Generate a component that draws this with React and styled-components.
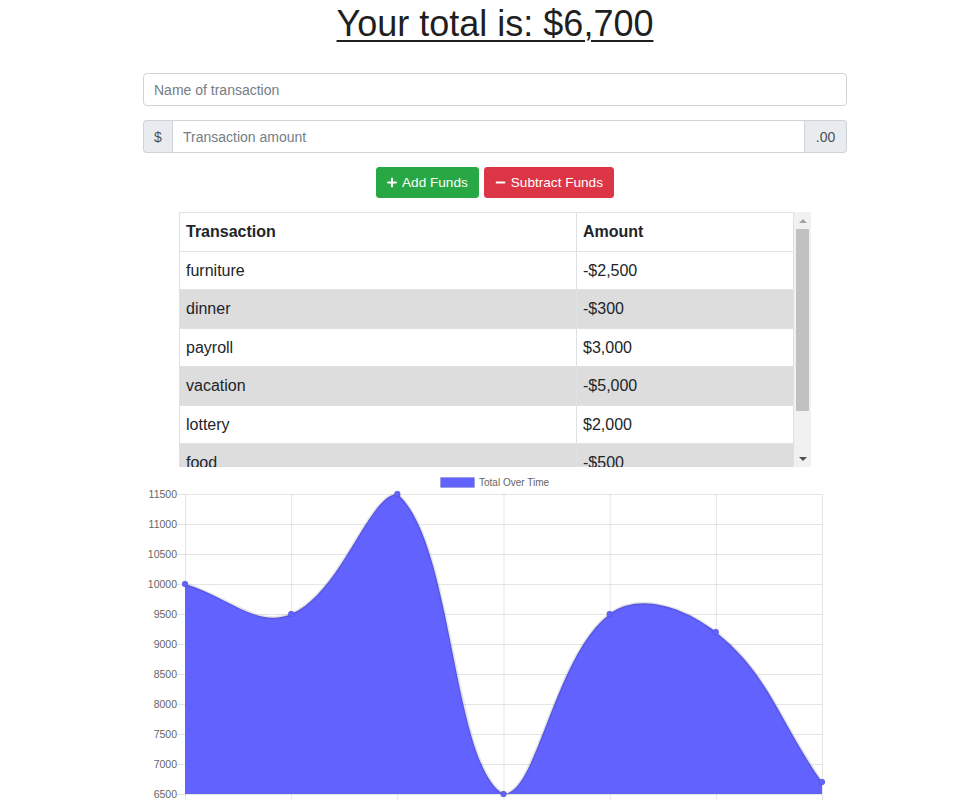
import React from 'react';
import styled, { createGlobalStyle } from 'styled-components';
import { FaPlus, FaMinus } from 'react-icons/fa';

const GlobalStyle = createGlobalStyle`
  html, body {
    margin: 0;
    padding: 0;
    overflow: hidden;
    background: #fff;
  }
  body {
    font-family: 'Liberation Sans', Arial, sans-serif;
    color: #212529;
  }
  * { box-sizing: border-box; }
`;

// Root shifts the centre line slightly right, like the original page
const Root = styled.div`
  padding-left: 15px;
`;

const Page = styled.div`
  width: 704px;
  margin: 0 auto;
  display: flex;
  flex-direction: column;
  align-items: center;
`;

const Title = styled.h1`
  margin: 0 0 28px;
  padding-top: 2px;
  font-size: 36px;
  line-height: 43px;
  font-weight: 400;
  color: #1f1f1f;
  text-decoration: underline;
  text-decoration-thickness: 2px;
  text-underline-offset: 4px;
`;

const Form = styled.div`
  width: 100%;
  display: flex;
  flex-direction: column;
  gap: 14px;
`;

const Input = styled.input`
  display: block;
  width: 100%;
  height: 33px;
  padding: 5px 10px;
  font-family: inherit;
  font-size: 14px;
  color: #495057;
  border: 1px solid #ced4da;
  border-radius: ${(p) => (p.$grouped ? '0' : '4px')};
  outline: none;
  flex: ${(p) => (p.$grouped ? '1 1 auto' : 'none')};
  min-width: 0;

  &::placeholder {
    color: #757d85;
  }
`;

const InputGroup = styled.div`
  display: flex;
  width: 100%;
  height: 33px;
`;

const Addon = styled.span`
  display: flex;
  align-items: center;
  justify-content: center;
  width: ${(p) => p.$width}px;
  flex: none;
  background: #e9ecef;
  border: 1px solid #ced4da;
  color: #495057;
  font-size: 14px;
  border-radius: ${(p) => (p.$side === 'left' ? '4px 0 0 4px' : '0 4px 4px 0')};
  ${(p) => (p.$side === 'left' ? 'border-right: none;' : 'border-left: none;')}
`;

const ButtonRow = styled.div`
  display: flex;
  gap: 5px;
  margin: 14px 0;
`;

const Button = styled.button`
  display: flex;
  align-items: center;
  gap: 5px;
  height: 31px;
  padding: 0 10px;
  font-family: inherit;
  font-size: 13.6px;
  color: #fff;
  border: 1px solid ${(p) => (p.$variant === 'danger' ? '#dc3545' : '#28a745')};
  background: ${(p) => (p.$variant === 'danger' ? '#dc3545' : '#28a745')};
  border-radius: 3px;
  cursor: pointer;

  svg {
    width: ${(p) => (p.$variant === 'danger' ? 11 : 10)}px;
    height: 11px;
  }
`;

const TableBox = styled.div`
  display: flex;
  width: 632px;
  height: 255px;
`;

const TableViewport = styled.div`
  flex: 1;
  overflow: hidden;
`;

const Table = styled.table`
  width: 100%;
  border-collapse: collapse;
  font-size: 16px;
`;

const Cell = styled.td`
  padding: 7px 7px 7px 6px;
  line-height: 23.5px;
  border: 1px solid #dee2e6;
  text-align: left;
  font-weight: ${(p) => (p.$head ? 700 : 400)};
  width: ${(p) => p.$width || 'auto'};
`;

const Row = styled.tr`
  background: ${(p) => (p.$striped ? '#dddddd' : '#ffffff')};
`;

const ScrollBar = styled.div`
  width: 17px;
  flex: none;
  display: flex;
  flex-direction: column;
  background: #f1f1f1;
`;

const ScrollArrow = styled.div`
  height: 17px;
  flex: none;
  display: flex;
  align-items: center;
  justify-content: center;

  &::after {
    content: '';
    width: 0;
    height: 0;
    border-left: 4px solid transparent;
    border-right: 4px solid transparent;
    ${(p) =>
      p.$dir === 'up'
        ? 'border-bottom: 4px solid #a3a3a3;'
        : 'border-top: 4px solid #505050;'}
  }
`;

const ScrollTrack = styled.div`
  flex: 1;
  padding: 0 2px;
`;

const ScrollThumb = styled.div`
  height: 182px;
  background: #c1c1c1;
`;

const ChartSvg = styled.svg`
  display: block;
  font-family: 'Liberation Sans', Arial, sans-serif;
`;

const transactions = [
  { name: 'furniture', amount: '-$2,500' },
  { name: 'dinner', amount: '-$300' },
  { name: 'payroll', amount: '$3,000' },
  { name: 'vacation', amount: '-$5,000' },
  { name: 'lottery', amount: '$2,000' },
  { name: 'food', amount: '-$500' },
  { name: 'rent', amount: '-$1,000' },
];

const series = [10000, 9500, 11500, 6500, 9500, 9200, 6700];

const BLUE = '#6262ff';
const W = 704;
const H = 345;
const area = { left: 42, right: 679, top: 27, bottom: 327 };
const yMax = 11500;
const yMin = 6500;

const yPos = (v) => area.top + ((yMax - v) / (yMax - yMin)) * (area.bottom - area.top);
const xPos = (i) => area.left + (i * (area.right - area.left)) / (series.length - 1);

// same spline as chart.js line tension 0.4, control points capped to the area
function buildCurve(pts, t = 0.4) {
  const clamp = (v, lo, hi) => Math.max(lo, Math.min(hi, v));
  const cps = pts.map((p, i) => {
    const prev = pts[i - 1] || p;
    const next = pts[i + 1] || p;
    const d01 = Math.hypot(p.x - prev.x, p.y - prev.y);
    const d12 = Math.hypot(next.x - p.x, next.y - p.y);
    let s01 = d01 / (d01 + d12);
    let s12 = d12 / (d01 + d12);
    if (isNaN(s01)) s01 = 0;
    if (isNaN(s12)) s12 = 0;
    const fa = t * s01;
    const fb = t * s12;
    return {
      c1: {
        x: clamp(p.x - fa * (next.x - prev.x), area.left, area.right),
        y: clamp(p.y - fa * (next.y - prev.y), area.top, area.bottom),
      },
      c2: {
        x: clamp(p.x + fb * (next.x - prev.x), area.left, area.right),
        y: clamp(p.y + fb * (next.y - prev.y), area.top, area.bottom),
      },
    };
  });
  let d = `M${pts[0].x},${pts[0].y}`;
  for (let i = 1; i < pts.length; i++) {
    const a = cps[i - 1].c2;
    const b = cps[i].c1;
    d += ` C${a.x},${a.y} ${b.x},${b.y} ${pts[i].x},${pts[i].y}`;
  }
  return d;
}

const Chart = () => {
  const pts = series.map((v, i) => ({ x: xPos(i), y: yPos(v) }));
  const line = buildCurve(pts);
  const fill = `${line} L${pts[pts.length - 1].x},${area.bottom} L${pts[0].x},${area.bottom} Z`;
  const ticks = [];
  for (let v = yMax; v >= yMin; v -= 500) ticks.push(v);

  return (
    <ChartSvg width={W} height={H} viewBox={`0 0 ${W} ${H}`}>
      {/* legend */}
      <rect x="297.5" y="10.5" width="34" height="10" fill={BLUE} stroke="rgba(0,0,0,0.1)" />
      <text x="336" y="18.5" fontSize="10" fill="#666">
        Total Over Time
      </text>

      {/* grid */}
      {ticks.map((v) => (
        <g key={v}>
          <line
            x1={area.left - 8}
            x2={area.right}
            y1={yPos(v) + 0.5}
            y2={yPos(v) + 0.5}
            stroke="rgba(0,0,0,0.1)"
          />
          <text x={area.left - 8} y={yPos(v) + 4} fontSize="10.5" fill="#666" textAnchor="end">
            {v}
          </text>
        </g>
      ))}
      {series.map((_, i) => (
        <line
          key={i}
          x1={xPos(i) + 0.5}
          x2={xPos(i) + 0.5}
          y1={area.top}
          y2={area.bottom + 10}
          stroke="rgba(0,0,0,0.1)"
        />
      ))}

      {/* dataset */}
      <path d={fill} fill={BLUE} />
      <path d={line} fill="none" stroke="rgba(0,0,0,0.1)" strokeWidth="3" />
      {pts.map((p, i) => (
        <circle key={i} cx={p.x} cy={p.y} r="3" fill={BLUE} stroke="rgba(0,0,0,0.1)" />
      ))}
    </ChartSvg>
  );
};

const App = () => {
  return (
    <Root>
      <GlobalStyle />
      <Page>
        <Title>Your total is: $6,700</Title>
        <Form>
          <Input placeholder="Name of transaction" />
          <InputGroup>
            <Addon $side="left" $width={29}>$</Addon>
            <Input $grouped placeholder="Transaction amount" />
            <Addon $side="right" $width={42}>.00</Addon>
          </InputGroup>
        </Form>
        <ButtonRow>
          <Button $variant="success">
            <FaPlus />
            Add Funds
          </Button>
          <Button $variant="danger">
            <FaMinus />
            Subtract Funds
          </Button>
        </ButtonRow>
        <TableBox>
          <TableViewport>
            <Table>
              <thead>
                <Row>
                  <Cell as="th" $head $width="397px">Transaction</Cell>
                  <Cell as="th" $head>Amount</Cell>
                </Row>
              </thead>
              <tbody>
                {transactions.map((t, i) => (
                  <Row key={t.name} $striped={i % 2 === 1}>
                    <Cell>{t.name}</Cell>
                    <Cell>{t.amount}</Cell>
                  </Row>
                ))}
              </tbody>
            </Table>
          </TableViewport>
          <ScrollBar>
            <ScrollArrow $dir="up" />
            <ScrollTrack>
              <ScrollThumb />
            </ScrollTrack>
            <ScrollArrow $dir="down" />
          </ScrollBar>
        </TableBox>
        <Chart />
      </Page>
    </Root>
  );
};

export default App;
